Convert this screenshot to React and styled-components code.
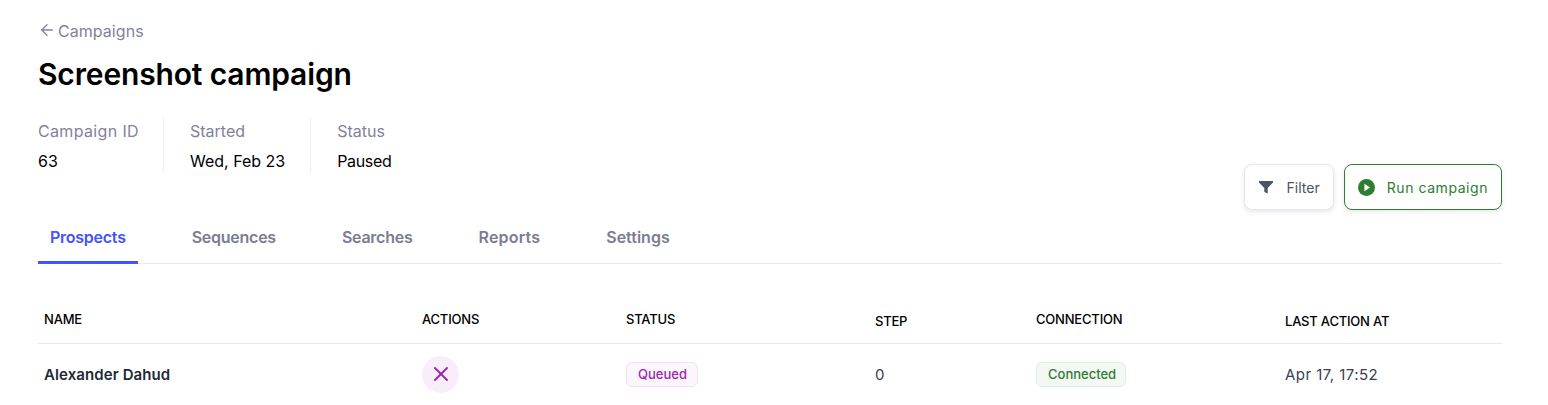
import React from 'react';
import styled, { createGlobalStyle } from 'styled-components';
import { ArrowLeft, X } from 'lucide-react';

const GlobalStyle = createGlobalStyle`
  html, body { margin: 0; padding: 0; background: #fff; overflow: hidden; }
  body { font-family: Inter, "Noto Sans", sans-serif; color: #000; }
  * { box-sizing: border-box; }
`;

const Page = styled.main`
  padding: 20px 46px 0 38px;
  height: 405px;
  overflow: hidden;
`;

const BackLink = styled.a`
  display: flex;
  align-items: center;
  gap: 2px;
  height: 22px;
  font-size: 16px;
  letter-spacing: .05px;
  color: #82829c;

  svg { margin-top: -3px; }
`;

const Title = styled.h1`
  margin: 12px 0 0;
  font-size: 30px;
  line-height: 40px;
  font-weight: 600;
  letter-spacing: -.15px;
  color: #000;
`;

const HeaderRow = styled.div`
  display: flex;
  justify-content: space-between;
  align-items: flex-end;
  margin-top: 23px;
`;

const Meta = styled.dl`
  display: flex;
  margin: 0 0 -1px;
  padding-bottom: 39px;
`;

const MetaItem = styled.div`
  padding: 2px 25px 0 26px;
  height: 55px;
  border-left: 1px solid #eeeef3;

  &:first-child { padding: 2px 24px 0 0; border-left: 0; }
`;

const MetaLabel = styled.dt`
  font-size: 16px;
  line-height: 24px;
  letter-spacing: ${({ $track }) => $track || 0}px;
  color: #82829c;
`;

const MetaValue = styled.dd`
  margin: 6px 0 0;
  font-size: 16px;
  line-height: 24px;
  letter-spacing: ${({ $track }) => $track || 0}px;
  color: #000;
`;

const Actions = styled.div`
  display: flex;
  gap: 10px;
`;

const Button = styled.button`
  display: flex;
  align-items: center;
  gap: 12px;
  height: 46px;
  padding: 0 13px;
  background: #fff;
  border: 1px solid ${({ $green }) => ($green ? '#2e7d32' : '#e6e6ec')};
  border-radius: 8px;
  box-shadow: 0 2px 5px rgba(60, 66, 87, .12);
  font: 400 14px Inter, sans-serif;
  letter-spacing: ${({ $green }) => ($green ? '.55px' : '.05px')};
  color: ${({ $green }) => ($green ? '#2e7d32' : '#4b5563')};
`;

const Tabs = styled.nav`
  display: flex;
  gap: 42px;
  height: 54px;
  border-bottom: 1px solid #e6e6ef;
`;

const Tab = styled.a`
  height: 54px;
  padding: 15px 12px 0;
  font-size: 16px;
  line-height: 24px;
  font-weight: 600;
  letter-spacing: ${({ $track }) => $track}px;
  color: ${({ $active }) => ($active ? '#4353ff' : '#7c7c90')};
  border-bottom: ${({ $active }) => ($active ? '3px solid #4353ff' : '0')};
`;

const Table = styled.table`
  width: 1464px;
  margin-top: 30px;
  border-collapse: collapse;
  table-layout: fixed;
`;

const Th = styled.th`
  height: 49px;
  padding: ${({ $low }) => ($low ? '6px 6px 0' : '2px 6px 0')};
  width: ${({ $w }) => $w}px;
  text-align: left;
  font-size: 13px;
  font-weight: 500;
  letter-spacing: -.2px;
  text-transform: uppercase;
  color: #000;
  border-bottom: 1px solid #e6e6ef;
`;

const Td = styled.td`
  height: 62px;
  padding: 0 6px;
  font-size: 15px;
  letter-spacing: ${({ $strong }) => ($strong ? '.1px' : '.45px')};
  color: ${({ $strong }) => ($strong ? '#1f2937' : '#374151')};
  font-weight: ${({ $strong }) => ($strong ? 600 : 400)};
`;

const RoundAction = styled.button`
  display: flex;
  align-items: center;
  justify-content: center;
  width: 37px;
  height: 37px;
  padding: 0;
  border: 0;
  border-radius: 50%;
  background: #f7eefa;
  color: #9c27b0;
`;

const Badge = styled.span`
  display: inline-block;
  height: 25px;
  padding: 0 ${({ $tone }) => ($tone === 'green' ? 9 : 10)}px 0 11px;
  border-radius: 6px;
  font-size: 13px;
  line-height: 23px;
  letter-spacing: 0;
  font-weight: 500;
  color: ${({ $tone }) => ($tone === 'green' ? '#2e7d32' : '#9c27b0')};
  background: ${({ $tone }) => ($tone === 'green' ? '#f4f8f4' : '#fbf5fc')};
  border: 1px solid ${({ $tone }) => ($tone === 'green' ? '#e4ece4' : '#f3e0f7')};
`;

const FilterIcon = () => (
  <svg width="16" height="16" viewBox="0 0 16 16" fill="#4b5563">
    <path d="M1 2h14v1.4L9.7 9v5.6L6.3 13V9L1 3.4z" />
  </svg>
);

const PlayIcon = () => (
  <svg width="17" height="17" viewBox="0 0 17 17">
    <circle cx="8.5" cy="8.5" r="8.5" fill="#2e7d32" />
    <path d="M6.4 4.8l5.6 3.7-5.6 3.7z" fill="#fff" />
  </svg>
);

const meta = [
  ['Campaign ID', '63', .35, 0],
  ['Started', 'Wed, Feb 23', 0, 0],
  ['Status', 'Paused', 0, -.35],
];

const tabs = [
  ['Prospects', -.25],
  ['Sequences', -.25],
  ['Searches', -.25],
  ['Reports', .2],
  ['Settings', 0],
];

export default function App() {
  return (
    <>
      <GlobalStyle />
      <Page>
        <BackLink>
          <ArrowLeft size={18} strokeWidth={1.75} />
          Campaigns
        </BackLink>
        <Title>Screenshot campaign</Title>
        <HeaderRow>
          <Meta>
            {meta.map(([label, value, labelTrack, valueTrack]) => (
              <MetaItem key={label}>
                <MetaLabel $track={labelTrack}>{label}</MetaLabel>
                <MetaValue $track={valueTrack}>{value}</MetaValue>
              </MetaItem>
            ))}
          </Meta>
          <Actions>
            <Button><FilterIcon />Filter</Button>
            <Button $green><PlayIcon />Run campaign</Button>
          </Actions>
        </HeaderRow>
        <Tabs>
          {tabs.map(([t, track], i) => <Tab key={t} $track={track} $active={i === 0}>{t}</Tab>)}
        </Tabs>
        <Table>
          <thead>
            <tr>
              <Th $w={378}>Name</Th>
              <Th $w={204}>Actions</Th>
              <Th $w={249}>Status</Th>
              <Th $w={161} $low>Step</Th>
              <Th $w={249}>Connection</Th>
              <Th $w={223} $low>Last action at</Th>
            </tr>
          </thead>
          <tbody>
            <tr>
              <Td $strong>Alexander Dahud</Td>
              <Td><RoundAction><X size={24} strokeWidth={2} /></RoundAction></Td>
              <Td><Badge>Queued</Badge></Td>
              <Td>0</Td>
              <Td><Badge $tone="green">Connected</Badge></Td>
              <Td>Apr 17, 17:52</Td>
            </tr>
          </tbody>
        </Table>
      </Page>
    </>
  );
}
